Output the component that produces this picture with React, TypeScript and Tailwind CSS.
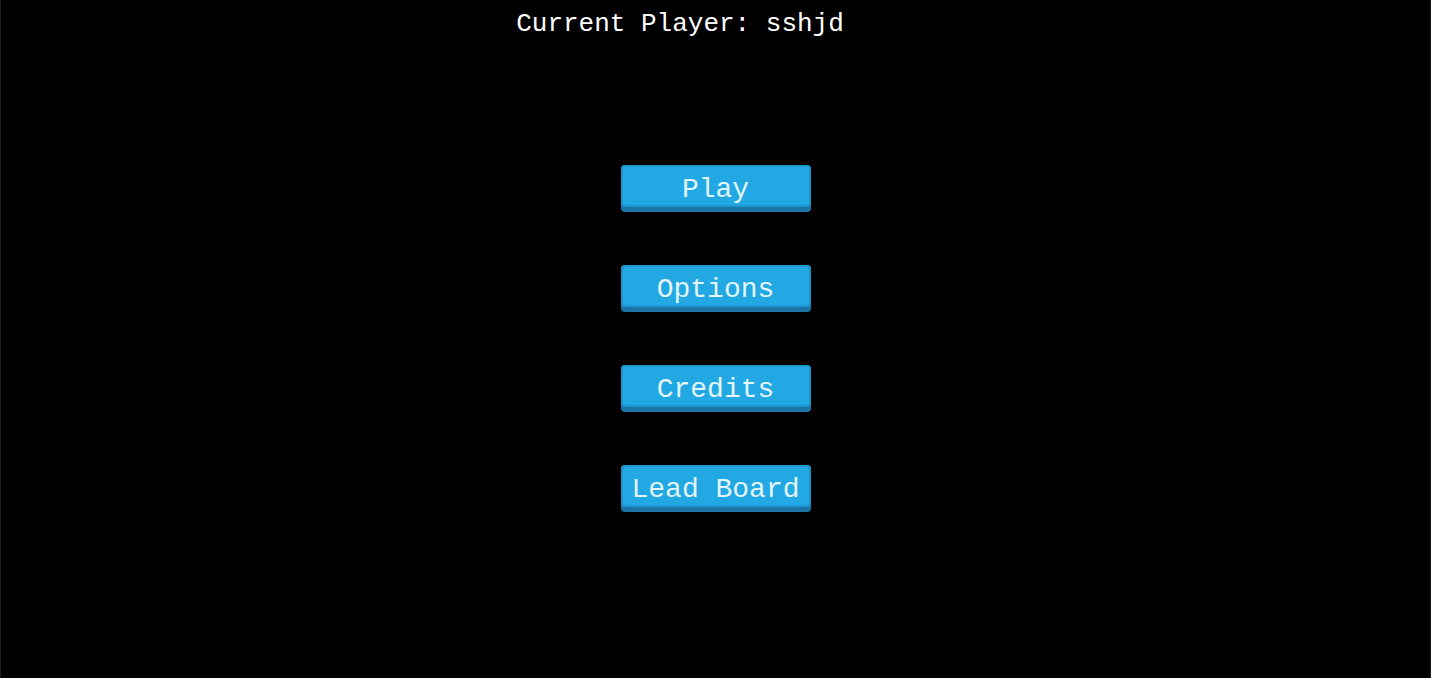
import React from 'react';

const items = ['Play', 'Options', 'Credits', 'Lead Board'];

function MenuButton({ label }: { label: string }) {
  return (
    <button className="w-[190px] h-[47px] rounded-[4px] bg-[#1a76a6] pb-[5px] cursor-pointer">
      <div className="h-[42px] rounded-[4px] border-2 border-[#1e97d1] bg-[#22a8e2] flex items-center justify-center text-[28px] leading-none text-[#e3f5fd] font-['Liberation_Mono','Courier_New',monospace] whitespace-nowrap pt-[7px]">
        {label}
      </div>
    </button>
  );
}

export default function App() {
  return (
    <div className="w-full h-[678px] bg-black border-x border-[#1c1c1c] flex flex-col items-center overflow-hidden">
      {/* Header */}
      <div className="w-full flex justify-center pr-[71px] pt-[9px]">
        <span className="text-[26px] leading-[30px] text-white font-['Liberation_Mono','Courier_New',monospace] whitespace-pre">
          Current Player: sshjd
        </span>
      </div>

      {/* Menu */}
      <div className="flex flex-col items-center gap-[53px] mt-[126px]">
        {items.map((label) => (
          <MenuButton key={label} label={label} />
        ))}
      </div>
    </div>
  );
}
